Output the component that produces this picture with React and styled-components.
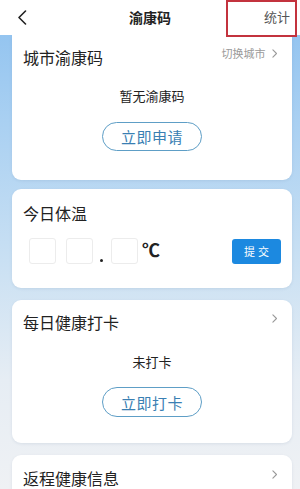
import React from "react";
import styled, { createGlobalStyle } from "styled-components";

const Global = createGlobalStyle`
  html, body { margin: 0; padding: 0; }
  body {
    width: 300px;
    height: 489px;
    overflow: hidden;
    font-family: "Noto Sans CJK SC", "Noto Sans", sans-serif;
    background: #fff;
  }
`;

const Page = styled.div`
  width: 300px;
  height: 489px;
  overflow: hidden;
  display: flex;
  flex-direction: column;
  background: linear-gradient(180deg, #8cc0ef 0px, #a9d0f2 120px, #c9e0f3 260px, #e6edf4 380px, #eff1f4 489px);
`;

const Header = styled.div`
  position: relative;
  height: 35px;
  flex: none;
  background: #fff;
  display: grid;
  grid-template-columns: 60px 1fr 60px;
  align-items: center;
`;

const Back = styled.div`
  display: flex;
  align-items: center;
  padding-left: 17px;
  height: 35px;
`;

const Title = styled.div`
  text-align: center;
  font-size: 14px;
  font-weight: 700;
  color: #222;
  line-height: 20px;
  margin-top: -1px;
`;

const Stat = styled.div`
  text-align: right;
  padding-right: 10px;
  font-size: 13px;
  color: #555;
  line-height: 20px;
  margin-top: -2px;
`;

const RedBox = styled.div`
  position: absolute;
  left: 226px;
  top: 0;
  width: 67px;
  height: 33px;
  border: 2px solid #c3333e;
  pointer-events: none;
`;

const Card = styled.div`
  flex: none;
  margin: ${(p) => p.$mt || 0}px 8px 0 12px;
  background: #fff;
  border-radius: ${(p) => (p.$flatTop ? "0 0 9px 9px" : "9px")};
  box-shadow: 0 1px 3px rgba(80, 110, 150, 0.12);
  padding: ${(p) => p.$pt}px 11px ${(p) => p.$pb}px 11px;
  display: flex;
  flex-direction: column;
  box-sizing: border-box;
`;

const TitleRow = styled.div`
  display: flex;
  align-items: center;
  justify-content: space-between;
  height: 20px;
`;

const CardTitle = styled.div`
  font-size: 16px;
  color: #222;
  line-height: 20px;
`;

const Aside = styled.div`
  display: flex;
  align-items: center;
  gap: 6px;
  font-size: 11px;
  color: #9a9a9a;
  margin-top: -8px;
  padding-right: 4px;
`;

const Status = styled.div`
  text-align: center;
  font-size: 13px;
  line-height: 18px;
  color: #222;
  margin-top: ${(p) => p.$mt}px;
`;

const PillWrap = styled.div`
  display: flex;
  justify-content: center;
  margin-top: ${(p) => p.$mt}px;
`;

const Pill = styled.div`
  width: 100px;
  height: ${(p) => p.$h || 29}px;
  box-sizing: border-box;
  border: 1.5px solid #5e9ec6;
  border-radius: 16px;
  display: flex;
  align-items: center;
  justify-content: center;
  font-size: 15px;
  color: #3a7fb3;
  letter-spacing: 0.5px;
`;

const TempRow = styled.div`
  display: flex;
  align-items: center;
  margin-top: 15px;
  padding-left: 6px;
  height: 26px;
`;

const DigitBox = styled.div`
  width: 27px;
  height: 26px;
  box-sizing: border-box;
  border: 1px solid #ececec;
  border-radius: 3px;
  margin-right: ${(p) => p.$mr || 0}px;
`;

const Dot = styled.div`
  width: 3px;
  height: 3px;
  border-radius: 50%;
  background: #222;
  align-self: flex-end;
  margin: 0 8px 2px 7px;
`;

const Unit = styled.div`
  font-size: 18px;
  font-weight: 700;
  color: #222;
  margin-left: 4px;
  line-height: 20px;
  font-family: "Liberation Sans", "Noto Sans CJK SC", sans-serif;
`;

const Submit = styled.div`
  margin-left: auto;
  width: 49px;
  height: 25px;
  border-radius: 3px;
  background: #1c89e0;
  color: #fff;
  font-size: 11px;
  letter-spacing: 3px;
  padding-left: 3px;
  box-sizing: border-box;
  display: flex;
  align-items: center;
  justify-content: center;
`;

const Chev = ({ size = 9, color = "#999", w = 1.2 }) => (
  <svg width={size * 0.6} height={size} viewBox="0 0 6 10" fill="none">
    <path d="M1 1l4 4-4 4" stroke={color} strokeWidth={w} strokeLinecap="round" strokeLinejoin="round" />
  </svg>
);

export default function App() {
  return (
    <>
      <Global />
      <Page>
        <Header>
          <Back>
            <svg width="10" height="15" viewBox="0 0 10 15" fill="none">
              <path d="M8.5 1L2 7.5 8.5 14" stroke="#222" strokeWidth="1.6" strokeLinecap="round" strokeLinejoin="round" />
            </svg>
          </Back>
          <Title>渝康码</Title>
          <Stat>统计</Stat>
          <RedBox />
        </Header>

        <Card $pt={12} $pb={29} $flatTop>
          <TitleRow>
            <CardTitle>城市渝康码</CardTitle>
            <Aside>
              切换城市
              <Chev size={9} color="#9a9a9a" />
            </Aside>
          </TitleRow>
          <Status $mt={20}>暂无渝康码</Status>
          <PillWrap $mt={17}>
            <Pill>立即申请</Pill>
          </PillWrap>
        </Card>

        <Card $mt={9} $pt={14} $pb={24}>
          <TitleRow>
            <CardTitle>今日体温</CardTitle>
          </TitleRow>
          <TempRow>
            <DigitBox $mr={10} />
            <DigitBox />
            <Dot />
            <DigitBox />
            <Unit>℃</Unit>
            <Submit>提交</Submit>
          </TempRow>
        </Card>

        <Card $mt={12} $pt={12} $pb={26}>
          <TitleRow>
            <CardTitle>每日健康打卡</CardTitle>
            <Aside>
              <Chev size={9} color="#999" />
            </Aside>
          </TitleRow>
          <Status $mt={21}>未打卡</Status>
          <PillWrap $mt={16}>
            <Pill $h={30}>立即打卡</Pill>
          </PillWrap>
        </Card>

        <Card $mt={12} $pt={13} $pb={20}>
          <TitleRow>
            <CardTitle>返程健康信息</CardTitle>
            <Aside>
              <Chev size={9} color="#999" />
            </Aside>
          </TitleRow>
        </Card>
      </Page>
    </>
  );
}
